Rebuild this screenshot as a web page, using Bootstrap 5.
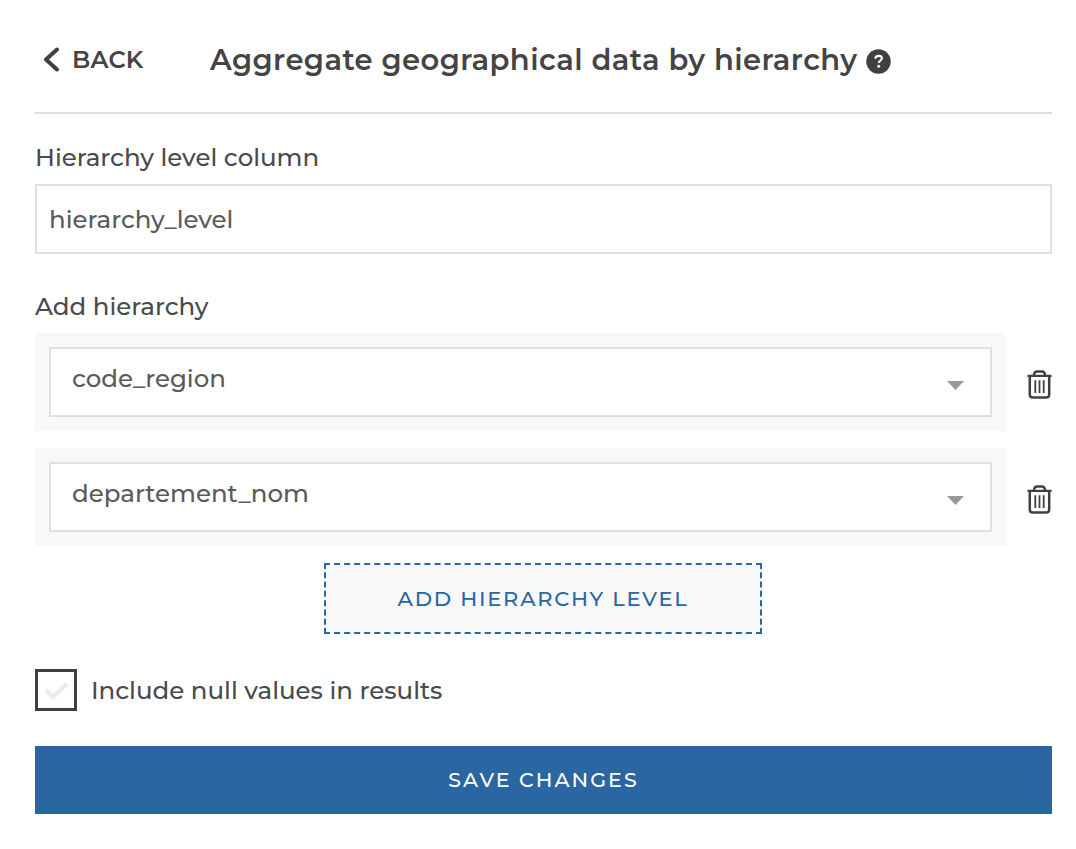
<!DOCTYPE html>
<html lang="en">
<head>
<meta charset="utf-8">
<meta name="viewport" content="width=device-width, initial-scale=1">
<title>Aggregate geographical data by hierarchy</title>
<link href="https://cdn.jsdelivr.net/npm/bootstrap@5.3.0/dist/css/bootstrap.min.css" rel="stylesheet">
<style>
body{font-family:Montserrat,Inter,sans-serif;font-size:24.5px;font-weight:500;line-height:30px;color:#4a4a4a;background:#fff}
.step-form{padding:0 24px 0 35px}
.step-head{height:114px;padding:7px 0 0 8px;border-bottom:2px solid #e0e0e0}
.back-link{width:167px;font-size:24px;font-weight:600;letter-spacing:.2px;color:#444}
.back-link svg{margin-right:12px}
.step-title{font-size:29px;line-height:34px;font-weight:600;letter-spacing:.42px;color:#444}
.help-mark{margin:3px 0 0 8.5px}
.field-name{line-height:30px}
.step-head + .field-name{margin:28px 0 12px}
.field-box + .field-name{margin:37px 0 11.5px}
.field-box,.field-box:focus{height:70px;border:2px solid #e0e0e0;border-radius:0;padding:0 12px;font-size:24.5px;font-weight:500;color:#5a5a5a;background:#fff;box-shadow:none}
.levels{gap:17.5px}
.levels .bin{margin-top:5px}
.level-wrap{width:971px;height:98px;padding:14px;background:#f8f8f8}
.level-box{height:70px;border:2px solid #e0e0e0;padding:0 26px 0 21px;color:#5a5a5a;background:#fff}
.level-box span{margin-top:-7.5px}
.level-box svg{margin-top:7px}
.add-btn{width:438px;height:71px;margin:17px 1px 0 0;padding-top:7px;border:2px dashed #2a66a1;border-radius:0;background:#f8f8f8;color:#2a66a1;font-size:21px;font-weight:500;letter-spacing:1.75px}
.null-row{margin-top:35px}
.null-box{width:42px;height:42px;border:3.5px solid #404040}
.null-text{margin-left:14px}
.save-btn{height:67.5px;margin-top:35px;padding-top:7px;border:0;border-radius:0;background:#2a66a1;color:#fff;font-size:20.5px;font-weight:500;letter-spacing:2.05px}
</style>
</head>
<body>
<main class="step-form d-flex flex-column">
  <header class="step-head d-flex align-items-center">
    <a href="#" class="back-link d-flex align-items-center text-decoration-none">
      <svg width="17" height="26" viewBox="0 0 17 26" fill="none" stroke="#404040" stroke-width="4" stroke-linecap="round" stroke-linejoin="round"><path d="M14 2.500 3 12.500 14 22.500"/></svg>
      <span>BACK</span>
    </a>
    <h1 class="step-title mb-0">Aggregate geographical data by hierarchy</h1>
    <svg class="help-mark" width="25" height="25" viewBox="0 0 25 25"><circle cx="12.5" cy="12.5" r="12.2" fill="#404040"/><path d="M9.3 9.6C9.500 7.700 10.800 6.900 12.700 6.900c2 0 3.200 1 3.200 2.400 0 2.300-3.100 2.200-3.100 4.700" fill="none" stroke="#fff" stroke-width="2.100"/><circle cx="12.7" cy="17.3" r="1.500" fill="#fff"/></svg>
  </header>

  <label for="level" class="field-name">Hierarchy level column</label>
  <input id="level" class="field-box form-control" value="hierarchy_level">

  <div class="field-name">Add hierarchy</div>
  <div class="levels d-flex flex-column">
    <div class="d-flex align-items-center justify-content-between">
      <div class="level-wrap"><div class="level-box d-flex align-items-center justify-content-between"><span>code_region</span><svg width="17" height="9" viewBox="0 0 17 9"><path d="M0 0H17L8.500 9Z" fill="#999"/></svg></div></div>
      <svg class="bin" width="25" height="29" viewBox="0 0 25 29" fill="none" stroke="#404040"><path d="M.5 5.800H24.500M6.800 5.500C7.100 2.600 8 1.500 10 1.500H15C17 1.500 17.900 2.600 18.200 5.500" stroke-width="2.300"/><path d="M2.800 6V24.500Q2.800 27.600 5.900 27.600H19.100Q22.200 27.600 22.200 24.500V6" stroke-width="2.500"/><path d="M8.300 10.200V23M12.500 10.200V23M16.700 10.200V23" stroke-width="1.800"/></svg>
    </div>
    <div class="d-flex align-items-center justify-content-between">
      <div class="level-wrap"><div class="level-box d-flex align-items-center justify-content-between"><span>departement_nom</span><svg width="17" height="9" viewBox="0 0 17 9"><path d="M0 0H17L8.500 9Z" fill="#999"/></svg></div></div>
      <svg class="bin" width="25" height="29" viewBox="0 0 25 29" fill="none" stroke="#404040"><path d="M.5 5.800H24.500M6.800 5.500C7.100 2.600 8 1.500 10 1.500H15C17 1.500 17.900 2.600 18.200 5.500" stroke-width="2.300"/><path d="M2.800 6V24.500Q2.800 27.600 5.900 27.600H19.100Q22.200 27.600 22.200 24.500V6" stroke-width="2.500"/><path d="M8.300 10.200V23M12.500 10.200V23M16.700 10.200V23" stroke-width="1.800"/></svg>
    </div>
  </div>
  <button type="button" class="add-btn btn align-self-center">ADD HIERARCHY LEVEL</button>

  <div class="null-row d-flex align-items-center">
    <div class="null-box d-flex align-items-center justify-content-center"><svg width="25" height="19" viewBox="0 0 25 19"><path d="M2 9 9.500 16 23 2.500" fill="none" stroke="#ebebeb" stroke-width="4.500"/></svg></div>
    <span class="null-text">Include null values in results</span>
  </div>
  <button type="button" class="save-btn btn w-100">SAVE CHANGES</button>
</main>
</body>
</html>
